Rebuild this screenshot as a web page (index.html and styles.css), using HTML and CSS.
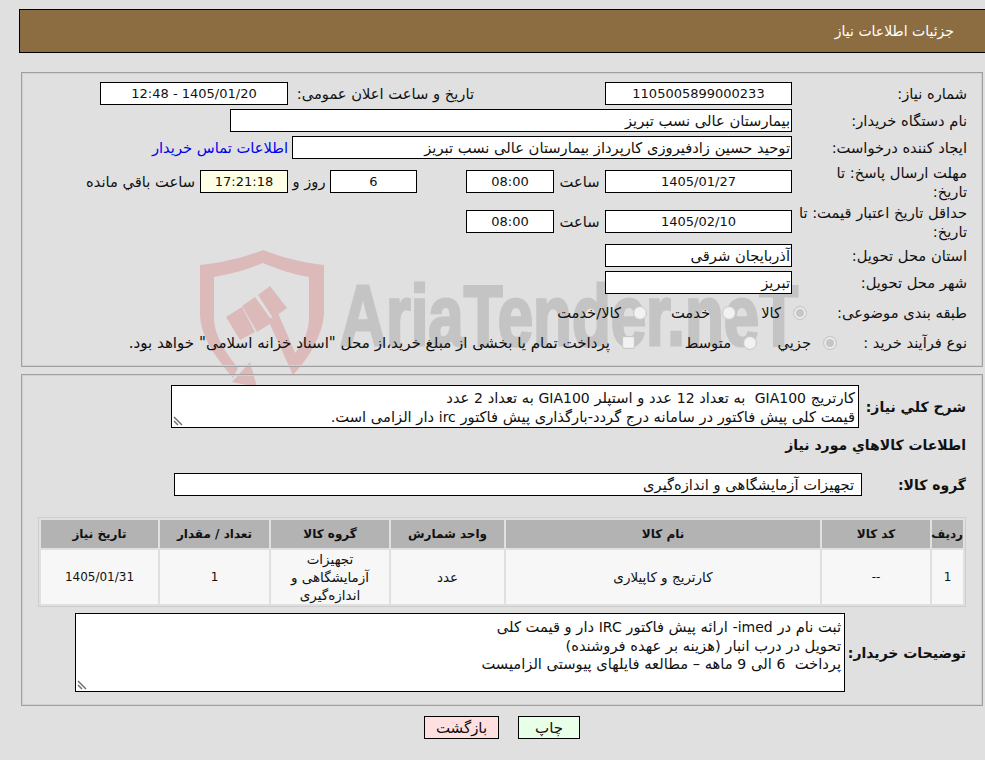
FILE: index.html
```html
<!DOCTYPE html>
<html lang="fa" dir="rtl">
<head>
<meta charset="utf-8">
<title>جزئیات اطلاعات نیاز</title>
<link rel="stylesheet" href="styles.css">
</head>
<body>
<svg class="watermark" viewBox="190 240 620 160" aria-hidden="true">
  <path class="wm-red" d="M233 378C214 355 200 335 200 313V265C222 263 245 257 263 250C281 257 303 263 324 265V315C322 335 310 357 293 375L288 362C300 348 309 335 309 318V277C292 274 277 269 263 263C249 269 232 274 214 277V318C214 335 225 352 238 368Z"/>
  <path class="wm-red" d="M226 317 242 307 255 332 240 340ZM242 306 255 297 273 322 257 332ZM258 295 270 286 287 308 273 318ZM268 320 278 313 299 362 293 375ZM250 362 257 387 232 382Z"/>
  <text class="wm-text" x="340" y="345" textLength="458" lengthAdjust="spacingAndGlyphs">AriaTender.neT</text>
</svg>

<header class="title-bar">جزئیات اطلاعات نیاز</header>

<section class="panel info">
  <div class="row">
    <label class="lbl">شماره نیاز:</label>
    <div class="box w187 c num">1105005899000233</div>
    <div class="spacer-a"></div>
    <label class="lbl2">تاریخ و ساعت اعلان عمومی:</label>
    <div class="box w188 c num">1405/01/20 - 12:48</div>
  </div>
  <div class="row gap4">
    <label class="lbl">نام دستگاه خریدار:</label>
    <div class="box w562">بیمارستان عالی نسب تبریز</div>
  </div>
  <div class="row gap4">
    <label class="lbl">ایجاد کننده درخواست:</label>
    <div class="box w500">توحید حسین زادفیروزی کارپرداز بیمارستان عالی نسب تبریز</div>
    <a class="link" href="#">اطلاعات تماس خریدار</a>
  </div>
  <div class="row deadline">
    <label class="lbl">مهلت ارسال پاسخ: تا تاریخ:</label>
    <div class="box w187 c num">1405/01/27</div>
    <span class="unit">ساعت</span>
    <div class="box w88 c num">08:00</div>
    <div class="gap49"></div>
    <div class="box w87 c num">6</div>
    <span class="unit2">روز و</span>
    <div class="box w88 c pale num">17:21:18</div>
    <span class="unit3">ساعت باقي مانده</span>
  </div>
  <div class="row validity">
    <label class="lbl">حداقل تاریخ اعتبار قیمت: تا تاریخ:</label>
    <div class="box w187 c num">1405/02/10</div>
    <span class="unit">ساعت</span>
    <div class="box w88 c num">08:00</div>
  </div>
  <div class="row gap4">
    <label class="lbl">استان محل تحویل:</label>
    <div class="box w187">آذربایجان شرقی</div>
  </div>
  <div class="row gap4">
    <label class="lbl">شهر محل تحویل:</label>
    <div class="box w187">تبریز</div>
  </div>
  <div class="row gap7">
    <label class="lbl">طبقه بندی موضوعی:</label>
    <div class="radios kinds">
      <span class="radio"><i class="on"></i>کالا</span>
      <span class="radio"><i></i>خدمت</span>
      <span class="radio"><i></i>کالا/خدمت</span>
    </div>
  </div>
  <div class="row gap7">
    <label class="lbl">نوع فرآیند خرید :</label>
    <div class="radios procs">
      <span class="radio"><i class="on"></i>جزیي</span>
      <span class="radio"><i></i>متوسط</span>
      <span class="radio wide"><i class="square"></i>پرداخت تمام یا بخشی از مبلغ خرید،از محل "اسناد خزانه اسلامی" خواهد بود.</span>
    </div>
  </div>
</section>

<section class="panel details">
  <div class="field-row">
    <label class="blbl w107">شرح کلي نیاز:</label>
    <div class="area a1">کارتریج <span class="lat">GIA100</span>&nbsp; به تعداد <span class="lat">12</span> عدد و استپلر <span class="lat">GIA100</span> به تعداد <span class="lat">2</span> عدد<br>قیمت کلی پیش فاکتور در سامانه درج گردد-بارگذاری پیش فاکتور <span class="lat">irc</span> دار الزامی است.<svg class="grip" viewBox="0 0 10 10"><path d="M1 1 9 9M1 5 5 9" /></svg></div>
  </div>
  <h2 class="subhead">اطلاعات کالاهاي مورد نیاز</h2>
  <div class="field-row">
    <label class="blbl w104">گروه کالا:</label>
    <div class="box group">تجهیزات آزمایشگاهی و اندازه‌گیری</div>
  </div>
  <table class="goods">
    <thead>
      <tr><th class="c1">ردیف</th><th class="c2">کد کالا</th><th class="c3">نام کالا</th><th class="c4">واحد شمارش</th><th class="c5">گروه کالا</th><th class="c6">تعداد / مقدار</th><th class="c7">تاریخ نیاز</th></tr>
    </thead>
    <tbody>
      <tr><td class="n12">1</td><td class="n12">--</td><td>کارتریج و کاپیلاری</td><td>عدد</td><td>تجهیزات آزمایشگاهی و اندازه‌گیری</td><td class="n12">1</td><td class="n12">1405/01/31</td></tr>
    </tbody>
  </table>
  <div class="field-row notes">
    <label class="blbl w121">توضیحات خریدار:</label>
    <div class="area a2">ثبت نام در <span class="lat">imed</span>- ارائه پیش فاکتور <span class="lat">IRC</span> دار و قیمت کلی<br>تحویل در درب انبار (هزینه بر عهده فروشنده)<br>پرداخت&nbsp; <span class="lat">6</span> الی <span class="lat">9</span> ماهه – مطالعه فایلهای پیوستی الزامیست<svg class="grip" viewBox="0 0 10 10"><path d="M1 1 9 9M1 5 5 9" /></svg></div>
  </div>
</section>

<div class="actions">
  <button class="btn print" type="button">چاپ</button>
  <button class="btn back" type="button">بازگشت</button>
</div>
</body>
</html>
```
FILE: styles.css
```css
html { background: #e0e0e0; }
body {
  margin: 0;
  width: 985px;
  height: 760px;
  overflow: hidden;
  position: relative;
  color: #111;
  font-family: "DejaVu Sans", sans-serif;
  font-size: 14.7px;
}
.num { font-size: 13px; }
.lat { font-size: 14px; }
.watermark {
  position: absolute;
  left: 190px;
  top: 240px;
  width: 620px;
  height: 160px;
  z-index: -1;
  direction: ltr;
}
.wm-red { fill: #dcbaba; }
.wm-text { fill: #c4c4c4; stroke: #c4c4c4; stroke-width: 3px; font: bold 86px "Liberation Sans", sans-serif; direction: ltr; }
.title-bar {
  box-sizing: border-box;
  margin: 9px -1px 0 0;
  width: 967px;
  height: 44px;
  border: 1px solid #000;
  background: #8c6d41;
  color: #fff;
  font-size: 14px;
  line-height: 42px;
  padding-right: 31px;
}
.panel {
  box-sizing: border-box;
  margin-right: 2px;
  width: 962px;
  border: 1px solid #a0a0a0;
  box-shadow: inset 0 0 0 1px #d0d0d0;
}
.info { margin-top: 19px; height: 295px; padding: 9px 15px 0 0; }
.row { display: flex; align-items: center; height: 23px; }
.gap4 { margin-top: 4px; }
.gap7 { margin-top: 7px; }
.deadline { height: 39px; margin-top: 3px; }
.validity { height: 37px; margin-top: 2px; }
.lbl { width: 175px; flex: none; line-height: 19px; padding-left: 6px; box-sizing: border-box; }
.lbl2 { width: 186px; flex: none; white-space: nowrap; }
.spacer-a { width: 131px; flex: none; }
.box {
  box-sizing: border-box;
  flex: none;
  height: 23px;
  line-height: 21px;
  border: 1px solid #000;
  background: #fff;
  padding: 0 1px;
  white-space: nowrap;
  overflow: hidden;
}
.c { text-align: center; }
.pale { background: #ffffe6; }
.w187 { width: 187px; }
.w188 { width: 188px; }
.w562 { width: 562px; }
.w500 { width: 500px; }
.w88 { width: 88px; }
.w87 { width: 87px; }
.link { color: #0000ee; text-decoration: none; margin-right: 4px; white-space: nowrap; }
.unit { width: 51px; flex: none; text-align: center; }
.gap49 { width: 49px; flex: none; }
.unit2 { width: 42px; flex: none; text-align: center; }
.unit3 { margin-right: 5px; white-space: nowrap; }
.radios { display: flex; align-items: center; white-space: nowrap; }
.radio { display: flex; align-items: center; gap: 12px; flex: none; }
.radio.wide { font-size: 15.1px; }
.radio i {
  display: block;
  box-sizing: border-box;
  width: 14px;
  height: 14px;
  border-radius: 50%;
  background: #f2f2f2;
  border: 1px solid #c8c8c8;
  box-shadow: inset 0 0 0 1px #ececec;
}
.radio i.on { background: #c6c6c6; box-shadow: inset 0 0 0 2px #ececec; }
.radio i.square { border-radius: 2px; width: 13px; height: 13px; }
.kinds { margin-right: -15px; }
.kinds .radio:nth-child(1) { width: 71px; }
.kinds .radio:nth-child(2) { width: 89px; }
.procs { margin-right: -45px; }
.procs .radio:nth-child(1) { width: 80px; }
.procs .radio:nth-child(2) { width: 122px; }
.details { margin-top: 7px; height: 332px; padding: 10px 16px 0 0; }
.field-row { display: flex; align-items: center; }
.blbl { flex: none; font-weight: bold; font-size: 14px; white-space: nowrap; }
.w107 { width: 107px; }
.w104 { width: 104px; }
.w121 { width: 121px; }
.area {
  position: relative;
  box-sizing: border-box;
  flex: none;
  border: 1px solid #000;
  background: #fff;
  line-height: 18.6px;
  padding: 3px 3px 0;
  white-space: nowrap;
}
.a1 { width: 688px; height: 43px; }
.a2 { width: 770px; height: 79px; padding-top: 4px; }
.grip { position: absolute; left: 1px; bottom: 1px; width: 10px; height: 10px; }
.grip path { stroke: #707070; fill: none; stroke-width: 1.5; }
.subhead { margin: 4px 0 15px; font-size: 14px; font-weight: bold; line-height: 26px; }
.group { width: 688px; padding-right: 7px; }
.goods {
  margin-top: 21px;
  width: 928px;
  border-collapse: separate;
  border-spacing: 2px;
  border: 1px solid #cdcdcd;
  table-layout: fixed;
  font-size: 13.5px;
}
.goods th { background: #b3b3b3; height: 28px; padding: 0; font-size: 12px; font-weight: bold; }
.goods td { background: #f7f7f7; text-align: center; height: 54px; padding: 0 10px; line-height: 18px; }
.goods td.n12 { font-size: 12px; }
.c1 { width: 31px; } .c2 { width: 108px; } .c3 { width: 314px; } .c4 { width: 113px; }
.c5 { width: 118px; } .c6 { width: 109px; } .c7 { width: 117px; }
.notes { margin-top: 6px; }
.actions { display: flex; justify-content: center; gap: 19px; margin-top: 10px; padding-left: 19px; }
.btn {
  box-sizing: border-box;
  height: 23px;
  border: 1px solid #000;
  font: 15px "DejaVu Sans", sans-serif;
  color: #111;
  padding: 0;
}
.print { width: 62px; background: #e8ffe8; }
.back { width: 75px; background: #ffdfdf; }
```
